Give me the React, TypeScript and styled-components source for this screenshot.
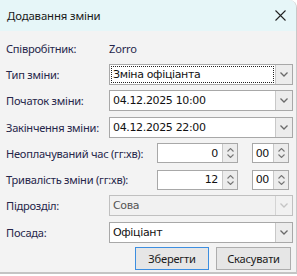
import React from "react";
import styled, { createGlobalStyle } from "styled-components";

const Global = createGlobalStyle`
  html, body { margin: 0; padding: 0; background: #ffffff; }
  body { width: 297px; height: 276px; overflow: hidden; }
`;

const Window = styled.div`
  width: 297px;
  height: 274px;
  box-sizing: border-box;
  background: #f3f3f3;
  border-right: 1px solid #c8c8c8;
  border-bottom: 2px solid #c4c4c4;
  border-top-right-radius: 8px;
  overflow: hidden;
  font-family: "Noto Sans", "Open Sans", sans-serif;
  display: flex;
  flex-direction: column;
`;

const TitleBar = styled.div`
  height: 31px;
  flex: none;
  background: #e6f6f8;
  display: flex;
  align-items: center;
  justify-content: space-between;
  padding: 0 8px 0 7px;
`;

const Title = styled.span`
  font-size: 11.4px;
  letter-spacing: -0.15px;
  color: #1a1a1a;
`;

const Close = styled.svg`
  width: 11px;
  height: 11px;
  margin-right: 2px;
`;

const Body = styled.div`
  display: flex;
  flex-direction: column;
  padding: 4px 3px 0 6px;
`;

const Row = styled.div<{ $h?: number }>`
  display: flex;
  align-items: center;
  height: ${(p) => p.$h ?? 26.3}px;
`;

const Label = styled.span<{ $w: number }>`
  width: ${(p) => p.$w}px;
  flex: none;
  font-size: 11.1px;
  letter-spacing: -0.25px;
  color: #26264a;
  white-space: nowrap;
`;

const Value = styled.span`
  font-size: 11.1px;
  letter-spacing: -0.2px;
  color: #26264a;
`;

const Combo = styled.div<{ $disabled?: boolean }>`
  width: 184px;
  height: 21px;
  box-sizing: border-box;
  border: 1px solid ${(p) => (p.$disabled ? "#c0c0c0" : "#a8a8a8")};
  background: ${(p) => (p.$disabled ? "#f1f1f1" : "#ffffff")};
  display: flex;
  align-items: stretch;
`;

const ComboText = styled.div<{ $focus?: boolean; $disabled?: boolean }>`
  flex: 1;
  display: flex;
  align-items: center;
  padding-left: 2px;
  margin: 1px;
  outline: ${(p) => (p.$focus ? "1px dotted #222" : "none")};
  outline-offset: -1px;
  font-family: "DejaVu Sans", Tahoma, sans-serif;
  font-size: 11px;
  letter-spacing: -0.35px;
  color: ${(p) => (p.$disabled ? "#555" : "#111")};
`;

const Arrow = styled.div<{ $disabled?: boolean }>`
  width: 16px;
  flex: none;
  border-left: 1px solid ${(p) => (p.$disabled ? "#d4d4d4" : "#c8c8c8")};
  background: ${(p) => (p.$disabled ? "#f1f1f1" : "#ececec")};
  display: flex;
  align-items: center;
  justify-content: center;
`;

const Spin = styled.div<{ $w: number }>`
  width: ${(p) => p.$w}px;
  height: 20px;
  box-sizing: border-box;
  border: 1px solid #a8a8a8;
  background: #fff;
  display: flex;
  align-items: stretch;
`;

const SpinText = styled.div`
  flex: 1;
  display: flex;
  align-items: center;
  justify-content: flex-end;
  padding-right: 4px;
  font-family: "DejaVu Sans", Tahoma, sans-serif;
  font-size: 11px;
  letter-spacing: -0.35px;
  color: #111;
`;

const SpinButtons = styled.div`
  width: 14px;
  flex: none;
  border-left: 1px solid #c8c8c8;
  background: #ececec;
  display: flex;
  flex-direction: column;
  align-items: center;
  justify-content: center;
  gap: 2px;
`;

const Gap = styled.div<{ $w: number }>`
  width: ${(p) => p.$w}px;
  flex: none;
`;

const Buttons = styled.div`
  display: flex;
  justify-content: flex-end;
  gap: 7px;
  padding: 2px 2px 0 0;
`;

const Button = styled.button<{ $primary?: boolean }>`
  height: 23px;
  box-sizing: border-box;
  padding: 0;
  width: ${(p) => (p.$primary ? 74 : 75)}px;
  border: 1px solid ${(p) => (p.$primary ? "#3c8ee0" : "#adadad")};
  background: #e6e6e6;
  font-family: "Noto Sans", "Open Sans", sans-serif;
  font-size: 11.1px;
  letter-spacing: -0.2px;
  color: #1a1a1a;
`;

const Chevron = ({ c = "#6a6a6a" }: { c?: string }) => (
  <svg width="8" height="5" viewBox="0 0 8 5">
    <path d="M0.5 0.5 L4 4 L7.5 0.5" fill="none" stroke={c} strokeWidth="1.3" />
  </svg>
);

const Up = () => (
  <svg width="7" height="4" viewBox="0 0 7 4">
    <path d="M0.5 3.5 L3.5 0.5 L6.5 3.5" fill="none" stroke="#777" strokeWidth="1.1" />
  </svg>
);
const Down = () => (
  <svg width="7" height="4" viewBox="0 0 7 4">
    <path d="M0.5 0.5 L3.5 3.5 L6.5 0.5" fill="none" stroke="#777" strokeWidth="1.1" />
  </svg>
);

const SpinBox = ({ w, value }: { w: number; value: string }) => (
  <Spin $w={w}>
    <SpinText>{value}</SpinText>
    <SpinButtons>
      <Up />
      <Down />
    </SpinButtons>
  </Spin>
);

const ComboBox = ({ value, focus, disabled }: { value: string; focus?: boolean; disabled?: boolean }) => (
  <Combo $disabled={disabled}>
    <ComboText $focus={focus} $disabled={disabled}>{value}</ComboText>
    <Arrow $disabled={disabled}>
      <Chevron c={disabled ? "#c4c4c4" : "#6a6a6a"} />
    </Arrow>
  </Combo>
);

export default function App() {
  return (
    <>
      <Global />
      <Window>
        <TitleBar>
          <Title>Додавання зміни</Title>
          <Close viewBox="0 0 11 11">
            <path d="M0.5 0.5 L10.5 10.5 M10.5 0.5 L0.5 10.5" stroke="#222" strokeWidth="1.1" />
          </Close>
        </TitleBar>
        <Body>
          <Row>
            <Label $w={103}>Співробітник:</Label>
            <Value>Zorro</Value>
          </Row>
          <Row>
            <Label $w={103}>Тип зміни:</Label>
            <ComboBox value="Зміна офіціанта" focus />
          </Row>
          <Row>
            <Label $w={103}>Початок зміни:</Label>
            <ComboBox value="04.12.2025 10:00" />
          </Row>
          <Row>
            <Label $w={103}>Закінчення зміни:</Label>
            <ComboBox value="04.12.2025 22:00" />
          </Row>
          <Row>
            <Label $w={151}>Неоплачуваний час (гг:хв):</Label>
            <SpinBox w={81} value="0" />
            <Gap $w={14} />
            <SpinBox w={37} value="00" />
          </Row>
          <Row>
            <Label $w={151}>Тривалість зміни (гг:хв):</Label>
            <SpinBox w={81} value="12" />
            <Gap $w={14} />
            <SpinBox w={37} value="00" />
          </Row>
          <Row>
            <Label $w={103}>Підрозділ:</Label>
            <ComboBox value="Сова" disabled />
          </Row>
          <Row>
            <Label $w={103}>Посада:</Label>
            <ComboBox value="Офіціант" />
          </Row>
          <Buttons>
            <Button $primary>Зберегти</Button>
            <Button>Скасувати</Button>
          </Buttons>
        </Body>
      </Window>
    </>
  );
}
